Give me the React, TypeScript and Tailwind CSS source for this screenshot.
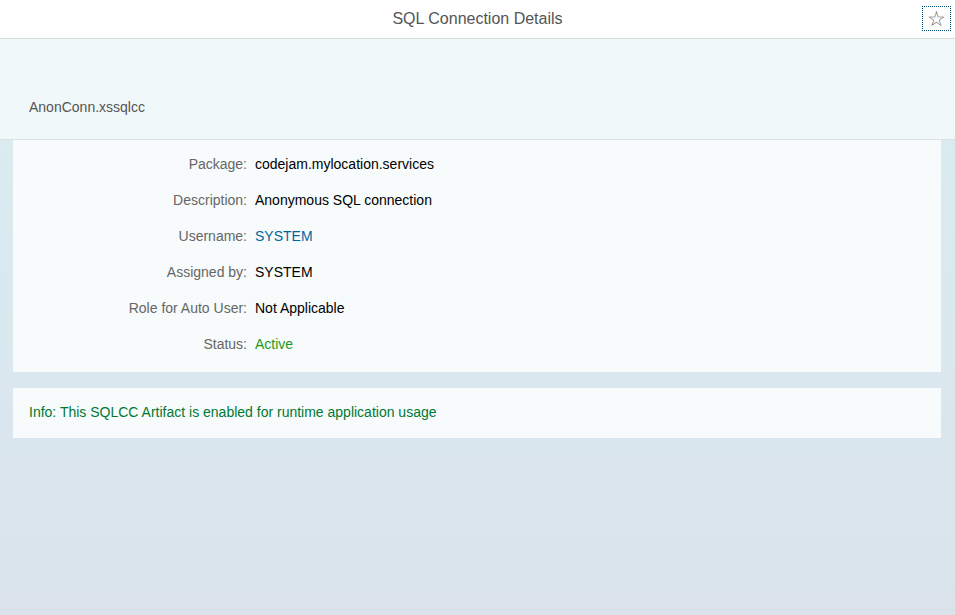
const rows: { label: string; value: string; color: string }[] = [
  { label: 'Package:', value: 'codejam.mylocation.services', color: 'text-black' },
  { label: 'Description:', value: 'Anonymous SQL connection', color: 'text-black' },
  { label: 'Username:', value: 'SYSTEM', color: 'text-[#00679e]' },
  { label: 'Assigned by:', value: 'SYSTEM', color: 'text-black' },
  { label: 'Role for Auto User:', value: 'Not Applicable', color: 'text-black' },
  { label: 'Status:', value: 'Active', color: 'text-[#1e9a1e]' },
]

export default function App() {
  return (
    <div className="flex h-[615px] w-full flex-col bg-gradient-to-b from-[#daeef2] to-[#dae3ec] font-['Liberation_Sans',Arial,sans-serif]">
      {/* Header bar */}
      <header className="relative flex h-[39px] shrink-0 items-center justify-center border-b border-[#d9dcdd] bg-white">
        <h1 className="text-[16px] text-[#555]">SQL Connection Details</h1>
        <button className="absolute right-[4px] top-[6px] flex h-[25px] w-[29px] items-center justify-center border border-dotted border-[#00507a] pb-[1px] text-[21px] leading-none text-[#666]">
          ☆
        </button>
      </header>

      {/* Object header */}
      <div className="flex h-[101px] shrink-0 items-end border-b border-[#dde3e5] bg-[#f0f8f9] px-[29px] pb-[21px]">
        <span className="text-[14px] text-[#555]">AnonConn.xssqlcc</span>
      </div>

      {/* Details */}
      <div className="ml-[13px] mr-[14px] flex flex-col gap-[18px] bg-[#f7fbfc] pb-[19px] pt-[15px] text-[14px]">
        {rows.map((r) => (
          <div key={r.label} className="flex leading-[18px]">
            <span className="w-[234px] text-right text-[#666]">{r.label}</span>
            <span className={`ml-[8px] ${r.color}`}>{r.value}</span>
          </div>
        ))}
      </div>

      {/* Info strip */}
      <div className="ml-[13px] mr-[14px] mt-[16px] flex h-[50px] items-center bg-[#f7fbfc] px-[16px] pb-[2px] text-[14px] text-[#007833]">
        Info: This SQLCC Artifact is enabled for runtime application usage
      </div>
    </div>
  )
}
